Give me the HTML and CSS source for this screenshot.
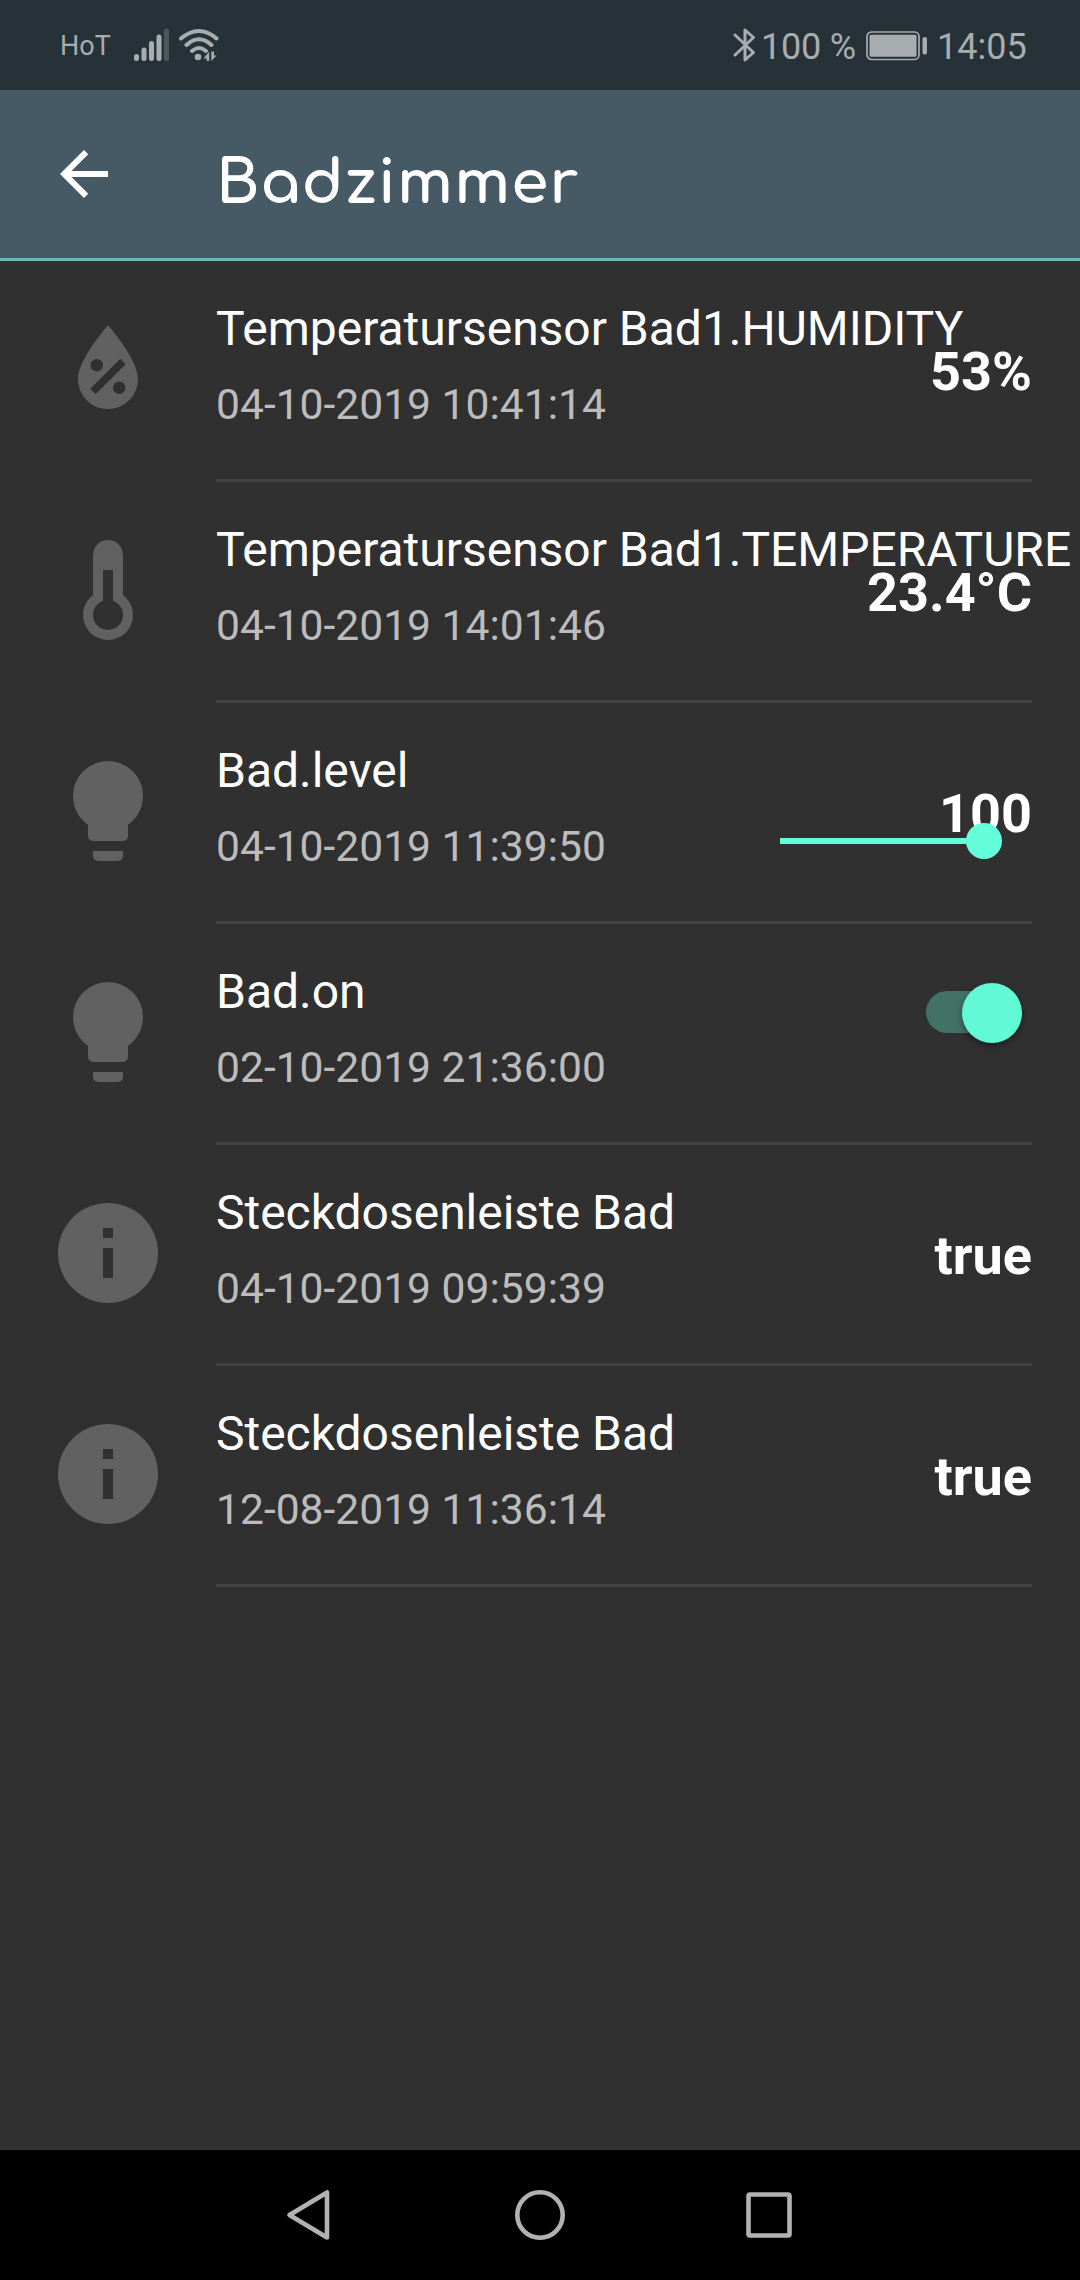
FILE: index.html
```html
<!DOCTYPE html>
<html lang="de">
<head>
<meta charset="utf-8">
<title>Badzimmer</title>
<link rel="stylesheet" href="styles.css">
</head>
<body>
<svg class="defs" width="0" height="0">
  <symbol id="humidity" viewBox="0 0 24 24"><path d="M12 3.25C12 3.25 6 10 6 14C6 17.32 8.69 20 12 20A6 6 0 0 0 18 14C18 10 12 3.25 12 3.25M14.47 9.97L15.53 11.03L9.53 17.03L8.47 15.97M9.75 10A1.25 1.25 0 0 1 11 11.25A1.25 1.25 0 0 1 9.75 12.5A1.25 1.25 0 0 1 8.5 11.25A1.25 1.25 0 0 1 9.75 10M14.25 14.5A1.25 1.25 0 0 1 15.5 15.75A1.25 1.25 0 0 1 14.25 17A1.25 1.25 0 0 1 13 15.75A1.25 1.25 0 0 1 14.25 14.5Z" fill-rule="evenodd"/></symbol>
  <symbol id="thermometer" viewBox="0 0 24 24"><path d="M17 17A5 5 0 0 1 7 17C7 15.36 7.79 13.91 9 13V5A3 3 0 0 1 15 5V13C16.21 13.91 17 15.36 17 17M11 8V14.17C9.83 14.58 9 15.69 9 17A3 3 0 0 0 15 17C15 15.69 14.17 14.58 13 14.17V8H11Z" fill-rule="evenodd"/></symbol>
  <symbol id="bulb" viewBox="0 0 24 24"><path d="M12 2A7 7 0 0 0 5 9C5 11.38 6.19 13.47 8 14.74V17A1 1 0 0 0 9 18H15A1 1 0 0 0 16 17V14.74C17.81 13.47 19 11.38 19 9A7 7 0 0 0 12 2M9 21A1 1 0 0 0 10 22H14A1 1 0 0 0 15 21V20H9V21Z"/></symbol>
  <symbol id="info" viewBox="0 0 24 24"><path d="M13 9H11V7H13ZM13 17H11V11H13ZM12 2A10 10 0 0 0 12 22A10 10 0 0 0 12 2Z" fill-rule="evenodd"/></symbol>
</svg>
<div class="screen">
  <div class="status">
    <span class="carrier">HoT</span>
    <svg class="signal" width="90" height="40" viewBox="0 0 90 40">
      <g stroke-width="5" stroke-linecap="round" stroke="currentColor">
        <path d="M4.5 31.5V33.5M12 25V33.5M19.5 18.5V33.5M27 12V33.5"/>
        <path d="M34.5 6V33.5" opacity=".3"/>
      </g>
      <g fill="none" stroke="currentColor" stroke-width="4" stroke-linecap="round">
        <path d="M49 13.5Q67 -1.5 84.500 13.5M54.500 20Q67 8.500 79.500 20M60 26Q67 20 74 26"/>
      </g>
      <circle cx="66" cy="32" r="3.3" fill="currentColor"/>
      <path d="M77.200 26.500V36H74.700V33.500H71.500ZM79.300 26.500V36L84.500 30.500H82V26.500Z" fill="currentColor"/>
    </svg>
    <span class="spacer"></span>
    <svg class="bluetooth" width="23" height="36" viewBox="0 0 23 36"><path d="M2 8L20.500 25.500L12 33V3L20.500 10.500L2 28" fill="none" stroke="currentColor" stroke-width="3" stroke-linecap="round" stroke-linejoin="round"/></svg>
    <span class="percent">100 %</span>
    <svg class="battery" width="62" height="30" viewBox="0 0 62 30">
      <rect x="1" y="1" width="52" height="27.5" rx="4.5" fill="none" stroke="currentColor" stroke-width="1.7"/>
      <rect x="3.5" y="3.7" width="47" height="22" rx="1.5" fill="currentColor"/>
      <rect x="56.5" y="6" width="4.5" height="17.5" rx="2" fill="currentColor"/>
    </svg>
    <span class="clock">14:05</span>
  </div>
  <header class="appbar">
    <svg class="back" width="72" height="72" viewBox="0 0 24 24"><path d="M20 11H7.830l5.590-5.590L12 4l-8 8 8 8 1.410-1.410L7.830 13H20v-2z" fill="#fff"/></svg>
    <h1>Badzimmer</h1>
  </header>
  <main class="list">
    <div class="row">
      <svg class="icon"><use href="#humidity"/></svg>
      <div class="body"><div class="name">Temperatursensor Bad1.HUMIDITY</div><div class="date">04-10-2019 10:41:14</div><div class="value">53%</div></div>
    </div>
    <div class="row">
      <svg class="icon"><use href="#thermometer"/></svg>
      <div class="body"><div class="name">Temperatursensor Bad1.TEMPERATURE</div><div class="date">04-10-2019 14:01:46</div><div class="value">23.4°C</div></div>
    </div>
    <div class="row">
      <svg class="icon"><use href="#bulb"/></svg>
      <div class="body"><div class="name">Bad.level</div><div class="date">04-10-2019 11:39:50</div><div class="value">100</div><div class="slider"><div class="knob"></div></div></div>
    </div>
    <div class="row">
      <svg class="icon"><use href="#bulb"/></svg>
      <div class="body"><div class="name">Bad.on</div><div class="date">02-10-2019 21:36:00</div><div class="switch"><div class="thumb"></div></div></div>
    </div>
    <div class="row">
      <svg class="icon"><use href="#info"/></svg>
      <div class="body"><div class="name">Steckdosenleiste Bad</div><div class="date">04-10-2019 09:59:39</div><div class="value">true</div></div>
    </div>
    <div class="row">
      <svg class="icon"><use href="#info"/></svg>
      <div class="body"><div class="name">Steckdosenleiste Bad</div><div class="date">12-08-2019 11:36:14</div><div class="value">true</div></div>
    </div>
  </main>
  <nav class="navbar">
    <svg width="50" height="54" viewBox="0 0 50 54"><path d="M41 4.500V49.500L3.500 27Z"/></svg>
    <svg width="54" height="54" viewBox="0 0 54 54"><circle cx="27" cy="27" r="22.700"/></svg>
    <svg width="50" height="54" viewBox="0 0 50 54"><rect x="4.500" y="6.500" width="41" height="41" rx="1.500"/></svg>
  </nav>
</div>
</body>
</html>
```
FILE: styles.css
```css
* { box-sizing: border-box; }
body { margin: 0; background: #303030; font-family: Roboto, "Liberation Sans", sans-serif; }
.defs { display: block; }
.screen { width: 1080px; height: 2280px; display: flex; flex-direction: column; overflow: hidden; }

.status { height: 90px; flex: none; display: flex; padding: 0 55px 0 60px; background: #263238; color: #a8adaf; white-space: nowrap; }
.carrier { width: 72px; font-size: 27px; line-height: 92px; }
.signal { margin-top: 25px; }
.spacer { flex: 1; }
.bluetooth { margin-top: 27px; margin-right: 5px; }
.percent { width: 105px; font-size: 36px; line-height: 94px; letter-spacing: -0.2px; }
.battery { margin-top: 31px; }
.clock { width: 97px; padding-left: 9px; font-size: 36px; line-height: 94px; }

.appbar { height: 171px; flex: none; display: flex; align-items: flex-start; padding: 48px 48px 0; background: #455a64; border-bottom: 3px solid #6fb5ad; }
.appbar h1 { margin: 0 0 0 96px; padding-top: 4px; font-family: Comfortaa, Inter, sans-serif; font-size: 60px; font-weight: 700; line-height: 84px; letter-spacing: 0.85px; color: #fff; }

.list { flex: 1; }
.row { height: 221px; display: flex; padding: 0 48px; }
.icon { width: 120px; height: 120px; margin: 48px 48px 0 0; flex: none; fill: #616161; }
.body { position: relative; width: 816px; padding-top: 40px; border-bottom: 3px solid #424242; white-space: nowrap; }
.name { font-size: 48px; line-height: 56px; color: #fff; letter-spacing: -0.02px; }
.date { margin-top: 22px; font-size: 42.6px; line-height: 50px; color: #bcbcbc; }
.value { position: absolute; right: 0; top: 79px; font-size: 54px; font-weight: 700; line-height: 64px; color: #fff; }
.slider { position: absolute; left: 564px; top: 135px; width: 204px; height: 6px; background: #64ffda; }
.knob { position: absolute; right: -18px; top: -15px; width: 36px; height: 36px; border-radius: 50%; background: #64ffda; }
.switch { position: absolute; left: 710px; top: 67px; width: 90px; height: 42px; border-radius: 21px; background: #417265; }
.thumb { position: absolute; right: -5.5px; top: -8.5px; width: 60px; height: 60px; border-radius: 50%; background: #62fad6; box-shadow: 0 3px 6px rgba(0, 0, 0, .4); }

.navbar { height: 130px; flex: none; display: flex; justify-content: center; align-items: center; gap: 177px; background: #000; }
.navbar svg { fill: none; stroke: #b2b2b2; stroke-width: 4.6; stroke-linejoin: round; }
```
